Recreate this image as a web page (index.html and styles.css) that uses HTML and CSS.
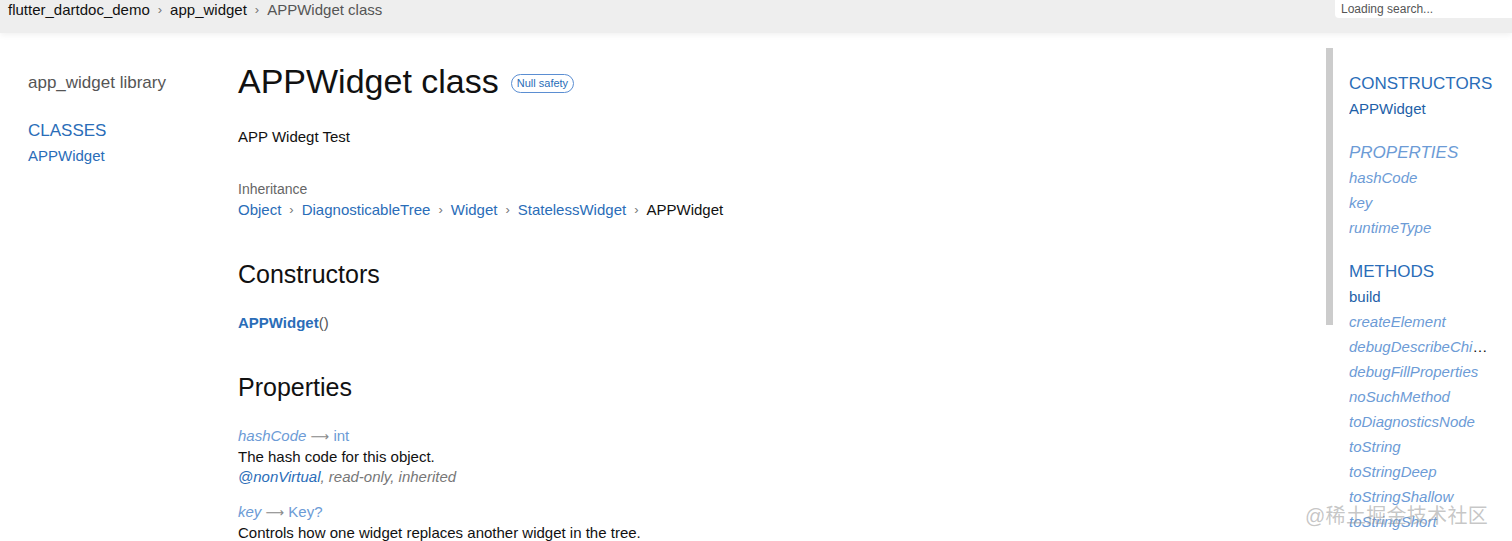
FILE: index.html
```html
<!DOCTYPE html>
<html>
<head>
<meta charset="utf-8">
<link rel="stylesheet" href="styles.css">
</head>
<body>
<header class="topbar">
  <ol class="crumbs">
    <li class="crumb">flutter_dartdoc_demo</li>
    <li class="sep">›</li>
    <li class="crumb">app_widget</li>
    <li class="sep">›</li>
    <li class="crumb current">APPWidget class</li>
  </ol>
  <div class="search">Loading search...</div>
</header>
<div class="layout">
  <nav class="left">
    <div class="libname">app_widget library</div>
    <div class="section-title">CLASSES</div>
    <div class="left-link">APPWidget</div>
  </nav>
  <main class="main">
    <h1 class="title">APPWidget class <span class="badge">Null safety</span></h1>
    <p class="desc">APP Widegt Test</p>
    <div class="inherit">
      <div class="label">Inheritance</div>
      <div class="chain">
        <a class="link">Object</a><span class="chev">›</span>
        <a class="link">DiagnosticableTree</a><span class="chev">›</span>
        <a class="link">Widget</a><span class="chev">›</span>
        <a class="link">StatelessWidget</a><span class="chev">›</span>
        <span class="self">APPWidget</span>
      </div>
    </div>
    <h2 class="h2">Constructors</h2>
    <div class="ctor"><a class="link strong">APPWidget</a><span class="paren">()</span></div>
    <h2 class="h2">Properties</h2>
    <dl class="props">
      <dt class="prop-name"><span class="inh">hashCode</span> <span class="arrow">⟶</span> <span class="type">int</span></dt>
      <dd class="prop-desc">The hash code for this object.</dd>
      <dd class="prop-feat"><a class="feat-link">@nonVirtual</a>, read-only, inherited</dd>
      <dt class="prop-name gap"><span class="inh">key</span> <span class="arrow">⟶</span> <span class="type">Key?</span></dt>
      <dd class="prop-desc">Controls how one widget replaces another widget in the tree.</dd>
    </dl>
  </main>
  <div class="scrollbar"><div class="thumb"></div></div>
  <aside class="right">
    <ul class="toc">
      <li class="toc-head">CONSTRUCTORS</li>
      <li><a class="toc-own">APPWidget</a></li>
      <li class="toc-head inh-head spaced">PROPERTIES</li>
      <li><a class="toc-inh">hashCode</a></li>
      <li><a class="toc-inh">key</a></li>
      <li><a class="toc-inh">runtimeType</a></li>
      <li class="toc-head spaced">METHODS</li>
      <li><a class="toc-own">build</a></li>
      <li><a class="toc-inh">createElement</a></li>
      <li><a class="toc-inh">debugDescribeChildren</a></li>
      <li><a class="toc-inh">debugFillProperties</a></li>
      <li><a class="toc-inh">noSuchMethod</a></li>
      <li><a class="toc-inh">toDiagnosticsNode</a></li>
      <li><a class="toc-inh">toString</a></li>
      <li><a class="toc-inh">toStringDeep</a></li>
      <li><a class="toc-inh">toStringShallow</a></li>
      <li><a class="toc-inh">toStringShort</a></li>
    </ul>
  </aside>
</div>
<div class="watermark">@稀土掘金技术社区</div>
</body>
</html>
```
FILE: styles.css
```css
html, body {
  margin: 0;
  padding: 0;
  background: #fff;
  overflow: hidden;
  height: 541px;
}
body {
  font-family: "Liberation Sans", Arial, "Noto Sans CJK SC", sans-serif;
  color: #111;
  position: relative;
}
.topbar {
  height: 33px;
  background: #eeeeee;
  box-shadow: 0 2px 6px rgba(0,0,0,0.06);
  display: flex;
  justify-content: space-between;
  align-items: flex-start;
  position: relative;
  z-index: 2;
}
.crumbs {
  list-style: none;
  margin: 0;
  padding: 0 0 0 8px;
  display: flex;
  align-items: center;
  height: 18px;
  font-size: 15px;
  gap: 8px;
}
.crumb { color: #111; }
.crumb.current { color: #555; }
.sep { color: #777; font-size: 13px; }
.search {
  width: 171px;
  height: 18px;
  background: #fff;
  border-radius: 0 0 0 4px;
  font-size: 12px;
  color: #555;
  padding-left: 6px;
  line-height: 18px;
}
.layout {
  display: flex;
  align-items: flex-start;
}
.left {
  width: 210px;
  padding-left: 28px;
  padding-top: 38px;
  flex: none;
}
.libname {
  font-size: 17px;
  color: #555;
  line-height: 24px;
}
.section-title {
  font-size: 17px;
  color: #2a6db8;
  margin-top: 24px;
  line-height: 24px;
}
.left-link {
  font-size: 15px;
  color: #2a6db8;
  line-height: 25px;
}
.main {
  flex: 1;
  padding-top: 26px;
}
.title {
  font-size: 34px;
  font-weight: 400;
  margin: 0;
  line-height: 44px;
  display: flex;
  align-items: center;
  gap: 12px;
}
.badge {
  font-size: 11px;
  color: #2a6db8;
  border: 1px solid #5b8ed2;
  border-radius: 10px;
  padding: 2px 5px;
  line-height: 13px;
  margin-top: 4px;
}
.desc {
  font-size: 15px;
  margin: 23px 0 0;
  line-height: 22px;
}
.inherit { margin-top: 31px; }
.label {
  font-size: 14px;
  color: #666;
  line-height: 20px;
}
.chain {
  font-size: 15px;
  line-height: 22px;
  display: flex;
  align-items: center;
}
.link { color: #2a6db8; }
.chev { color: #777; font-size: 13px; margin: 0 8px; }
.self { color: #111; }
.h2 {
  font-size: 25px;
  font-weight: 400;
  margin: 36px 0 0;
  line-height: 34px;
}
.ctor {
  font-size: 15px;
  margin-top: 21px;
  margin-bottom: 3px;
  line-height: 22px;
}
.strong { font-weight: 700; }
.paren { color: #555; }
.props { margin: 22px 0 0; }
.prop-name {
  font-size: 15px;
  line-height: 20px;
  color: #6c9bd6;
}
.prop-name.gap { margin-top: 15px; }
.inh { font-style: italic; }
.arrow {
  color: #8a8a8a;
  font-family: "DejaVu Sans", sans-serif;
  font-size: 13px;
}
.type { color: #6c9bd6; }
.prop-desc {
  margin: 0;
  font-size: 15px;
  line-height: 20px;
  color: #111;
}
.prop-feat {
  margin: 0;
  font-size: 15px;
  line-height: 20px;
  font-style: italic;
  color: #777;
}
.feat-link { color: #2a6db8; }
.scrollbar {
  width: 7px;
  flex: none;
  padding-top: 15px;
  margin-right: 16px;
}
.thumb {
  height: 277px;
  background: #cccccc;
}
.right {
  width: 140px;
  flex: none;
  margin-right: 23px;
  padding-top: 38px;
}
.toc {
  list-style: none;
  margin: 0;
  padding: 0;
}
.toc li {
  font-size: 15px;
  line-height: 25px;
  white-space: nowrap;
  overflow: hidden;
  text-overflow: ellipsis;
  color: #111;
}
.toc li.toc-head {
  font-size: 17px;
  color: #2a6db8;
  overflow: visible;
}
.toc li.toc-head.inh-head {
  font-style: italic;
  color: #6c9bd6;
}
.toc li.spaced { margin-top: 19px; }
.toc-own { color: #1e5fa8; }
.toc-inh {
  font-style: italic;
  color: #6c9bd6;
}
.watermark {
  position: absolute;
  left: 1305px;
  top: 500px;
  font-size: 20px;
  color: rgba(150,150,150,0.55);
  letter-spacing: 0.3px;
  z-index: 3;
}
```
